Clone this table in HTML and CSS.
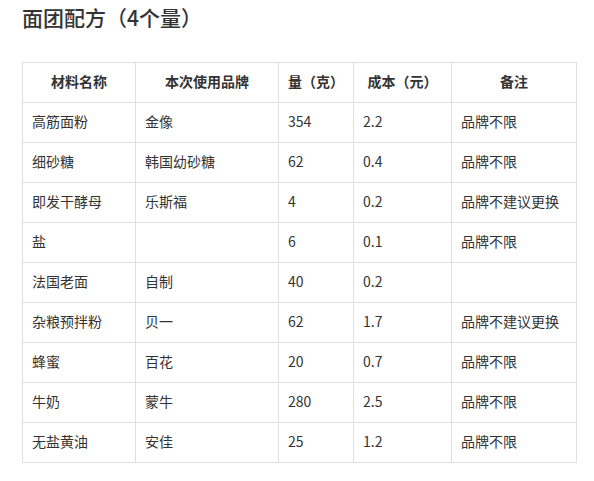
FILE: index.html
```html
<!DOCTYPE html>
<html lang="zh">
<head>
<meta charset="utf-8">
<link rel="stylesheet" href="styles.css">
</head>
<body>
<h2 class="title">面团配方（4个量）</h2>
<table class="recipe">
  <colgroup>
    <col class="c1"><col class="c2"><col class="c3"><col class="c4"><col class="c5">
  </colgroup>
  <thead>
    <tr><th>材料名称</th><th>本次使用品牌</th><th>量（克）</th><th>成本（元）</th><th>备注</th></tr>
  </thead>
  <tbody>
    <tr><td>高筋面粉</td><td>金像</td><td>354</td><td>2.2</td><td>品牌不限</td></tr>
    <tr><td>细砂糖</td><td>韩国幼砂糖</td><td>62</td><td>0.4</td><td>品牌不限</td></tr>
    <tr><td>即发干酵母</td><td>乐斯福</td><td>4</td><td>0.2</td><td>品牌不建议更换</td></tr>
    <tr><td>盐</td><td></td><td>6</td><td>0.1</td><td>品牌不限</td></tr>
    <tr><td>法国老面</td><td>自制</td><td>40</td><td>0.2</td><td></td></tr>
    <tr><td>杂粮预拌粉</td><td>贝一</td><td>62</td><td>1.7</td><td>品牌不建议更换</td></tr>
    <tr><td>蜂蜜</td><td>百花</td><td>20</td><td>0.7</td><td>品牌不限</td></tr>
    <tr><td>牛奶</td><td>蒙牛</td><td>280</td><td>2.5</td><td>品牌不限</td></tr>
    <tr><td>无盐黄油</td><td>安佳</td><td>25</td><td>1.2</td><td>品牌不限</td></tr>
  </tbody>
</table>
</body>
</html>
```
FILE: styles.css
```css
html, body {
  margin: 0;
  padding: 0;
  background: #fff;
}
body {
  padding: 0 22px;
  font-family: "Noto Sans CJK SC", "Noto Sans", sans-serif;
  color: #333;
}
.title {
  margin: 3px 0 0;
  font-size: 21px;
  line-height: 28px;
  font-weight: 500;
  color: #333;
}
.recipe {
  margin-top: 31px;
  border-collapse: collapse;
  table-layout: fixed;
  width: 554px;
  font-size: 14px;
}
.c1 { width: 113px; }
.c2 { width: 143px; }
.c3 { width: 75px; }
.c4 { width: 98px; }
.c5 { width: 125px; }
.recipe th, .recipe td {
  border: 1px solid #dfdfdf;
  height: 40px;
  padding: 0 9px 4px;
  box-sizing: border-box;
  line-height: 20px;
  vertical-align: middle;
}
.recipe th {
  font-weight: 700;
  text-align: center;
  color: #333;
}
.recipe td {
  text-align: left;
  color: #333;
}
```
